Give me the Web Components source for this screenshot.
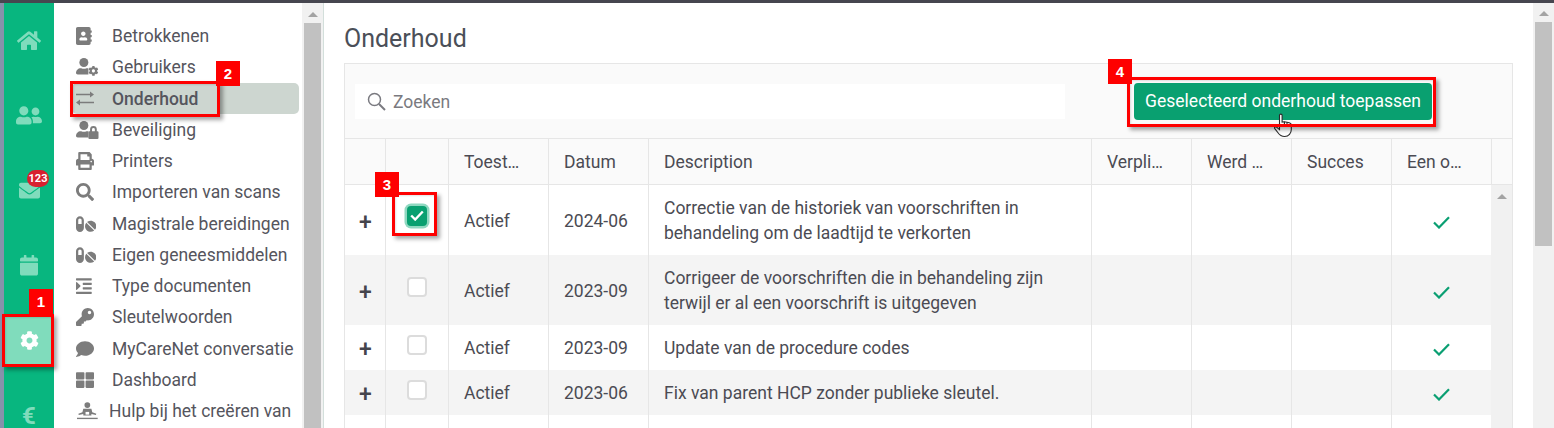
<!DOCTYPE html>
<html lang="nl">
<head>
<meta charset="utf-8">
<title>Onderhoud</title>
<style>
  html, body { margin: 0; height: 100%; overflow: hidden; background: #fff; }
  body { font-family: Roboto, "Liberation Sans", sans-serif; }
</style>
</head>
<body>
<app-shell>
  <side-rail slot="rail">
    <rail-item icon="home" size="24"></rail-item>
    <rail-item icon="friends" size="26"></rail-item>
    <rail-item icon="envelope" size="21" badge="123"></rail-item>
    <rail-item icon="calendar" size="18"></rail-item>
    <rail-item icon="cog" size="19" active></rail-item>
    <rail-item glyph="€"></rail-item>
  </side-rail>
  <side-menu slot="menu">
    <menu-item icon="book">Betrokkenen</menu-item>
    <menu-item icon="usercog">Gebruikers</menu-item>
    <menu-item icon="exchange" active>Onderhoud</menu-item>
    <menu-item icon="userlock">Beveiliging</menu-item>
    <menu-item icon="print">Printers</menu-item>
    <menu-item icon="search">Importeren van scans</menu-item>
    <menu-item icon="pills">Magistrale bereidingen</menu-item>
    <menu-item icon="pills">Eigen geneesmiddelen</menu-item>
    <menu-item icon="indent">Type documenten</menu-item>
    <menu-item icon="key">Sleutelwoorden</menu-item>
    <menu-item icon="comment">MyCareNet conversatie</menu-item>
    <menu-item icon="grid">Dashboard</menu-item>
    <menu-item icon="help" tight>Hulp bij het creëren van</menu-item>
  </side-menu>
  <maintenance-page heading="Onderhoud">
    <maintenance-row state="Actief" date="2024-06" tall checked>Correctie van de historiek van voorschriften in<br>behandeling om de laadtijd te verkorten</maintenance-row>
    <maintenance-row state="Actief" date="2023-09" tall striped>Corrigeer de voorschriften die in behandeling zijn<br>terwijl er al een voorschrift is uitgegeven</maintenance-row>
    <maintenance-row state="Actief" date="2023-09">Update van de procedure codes</maintenance-row>
    <maintenance-row state="Actief" date="2023-06" striped>Fix van parent HCP zonder publieke sleutel.</maintenance-row>
    <maintenance-row filler></maintenance-row>
  </maintenance-page>
</app-shell>

<hand-cursor style="left:1274px;top:113px"></hand-cursor>

<mark-box style="left:2px;top:314px;width:52px;height:53px"></mark-box>
<mark-tag style="left:29px;top:289px">1</mark-tag>
<mark-box style="left:70px;top:81px;width:150px;height:36px"></mark-box>
<mark-tag style="left:216px;top:61px">2</mark-tag>
<mark-box style="left:392px;top:192px;width:45px;height:44px"></mark-box>
<mark-tag style="left:375px;top:172px">3</mark-tag>
<mark-box style="left:1127px;top:77px;width:309px;height:50px"></mark-box>
<mark-tag style="left:1108px;top:59px">4</mark-tag>

<script>
'use strict';

(function () {
  // font awesome style shapes: [viewBox width, path]
  const ICONS = {
    home: [576, 'M280.37 148.26L96 300.11V464a16 16 0 0 0 16 16l112.06-.29a16 16 0 0 0 15.92-16V368a16 16 0 0 1 16-16h64a16 16 0 0 1 16 16v95.64a16 16 0 0 0 16 16.05L464 480a16 16 0 0 0 16-16V300L295.67 148.26a12.19 12.19 0 0 0-15.3 0zM571.6 251.47L488 182.56V44.05a12 12 0 0 0-12-12h-56a12 12 0 0 0-12 12v72.61L318.47 43a48 48 0 0 0-61 0L4.34 251.47a12 12 0 0 0-1.6 16.9l25.5 31A12 12 0 0 0 45.15 301l235.22-193.74a12.19 12.19 0 0 1 15.3 0L530.9 301a12 12 0 0 0 16.9-1.6l25.5-31a12 12 0 0 0-1.7-16.93z'],
    friends: [640, 'M192 256c61.9 0 112-50.1 112-112S253.9 32 192 32 80 82.1 80 144s50.1 112 112 112zm76.8 32h-8.3c-20.8 10-43.9 16-68.5 16s-47.6-6-68.5-16h-8.3C51.6 288 0 339.6 0 403.2V432c0 26.5 21.5 48 48 48h288c26.5 0 48-21.5 48-48v-28.8c0-63.6-51.6-115.2-115.2-115.2zM480 256c53 0 96-43 96-96s-43-96-96-96-96 43-96 96 43 96 96 96zm48 32h-3.8c-13.9 4.8-28.6 8-44.2 8s-30.3-3.2-44.2-8H432c-20.4 0-39.2 5.9-55.7 15.4 24.4 26.3 39.7 61.2 39.7 99.8v38.4c0 2.2-.5 4.3-.6 6.4H592c26.5 0 48-21.5 48-48 0-61.9-50.1-112-112-112z'],
    envelope: [512, 'M502.3 190.8c3.9-3.1 9.7-.2 9.7 4.7V400c0 26.5-21.5 48-48 48H48c-26.5 0-48-21.5-48-48V195.6c0-5 5.7-7.8 9.7-4.7 22.4 17.4 52.1 39.5 154.1 113.6 21.1 15.4 56.7 47.8 92.2 47.6 35.7.3 72-32.8 92.3-47.6 102-74.1 131.6-96.3 154-113.7zM256 320c23.2.4 56.6-29.2 73.4-41.4 132.7-96.3 142.8-104.7 173.4-128.7 5.8-4.5 9.2-11.5 9.2-18.9v-19c0-26.5-21.5-48-48-48H48C21.5 64 0 85.5 0 112v19c0 7.4 3.4 14.3 9.2 18.9 30.6 23.9 40.7 32.4 173.4 128.7 16.8 12.2 50.2 41.8 73.4 41.4z'],
    calendar: [448, 'M12 192h424c6.6 0 12 5.4 12 12v260c0 26.5-21.5 48-48 48H48c-26.5 0-48-21.5-48-48V204c0-6.6 5.4-12 12-12zm436-44v-36c0-26.5-21.5-48-48-48h-48V12c0-6.6-5.4-12-12-12h-40c-6.6 0-12 5.4-12 12v52H160V12c0-6.6-5.4-12-12-12h-40c-6.6 0-12 5.4-12 12v52H48C21.5 64 0 85.5 0 112v36c0 6.6 5.4 12 12 12h424c6.6 0 12-5.4 12-12z'],
    cog: [512, 'M487.4 315.7l-42.6-24.6c4.3-23.2 4.3-47 0-70.2l42.6-24.6c4.9-2.8 7.1-8.6 5.5-14-11.1-35.6-30-67.8-54.7-94.6-3.8-4.1-10-5.1-14.8-2.3L380.8 110c-17.9-15.4-38.5-27.3-60.8-35.1V25.8c0-5.6-3.9-10.5-9.4-11.7-36.7-8.2-74.3-7.8-109.2 0-5.5 1.2-9.4 6.1-9.4 11.7V75c-22.2 7.9-42.8 19.8-60.8 35.1L88.7 85.5c-4.9-2.8-11-1.9-14.8 2.3-24.7 26.7-43.6 58.9-54.7 94.6-1.7 5.4.6 11.2 5.5 14L67.3 221c-4.3 23.2-4.3 47 0 70.2l-42.6 24.6c-4.9 2.8-7.1 8.6-5.5 14 11.1 35.6 30 67.8 54.7 94.6 3.8 4.1 10 5.1 14.8 2.3l42.6-24.6c17.9 15.4 38.5 27.3 60.8 35.1v49.2c0 5.6 3.9 10.5 9.4 11.7 36.7 8.2 74.3 7.8 109.2 0 5.5-1.2 9.4-6.1 9.4-11.7v-49.2c22.2-7.9 42.8-19.8 60.8-35.1l42.6 24.6c4.9 2.8 11 1.9 14.8-2.3 24.7-26.7 43.6-58.9 54.7-94.6 1.5-5.5-.7-11.3-5.6-14.1zM256 336c-44.1 0-80-35.9-80-80s35.9-80 80-80 80 35.9 80 80-35.9 80-80 80z'],
    book: [448, 'M436 160c6.6 0 12-5.4 12-12v-40c0-6.6-5.4-12-12-12h-20V48c0-26.5-21.5-48-48-48H48C21.5 0 0 21.5 0 48v416c0 26.5 21.5 48 48 48h320c26.5 0 48-21.5 48-48v-48h20c6.6 0 12-5.4 12-12v-40c0-6.6-5.4-12-12-12h-20v-64h20c6.6 0 12-5.4 12-12v-40c0-6.6-5.4-12-12-12h-20v-64h20zm-228-32c35.3 0 64 28.7 64 64s-28.7 64-64 64-64-28.7-64-64 28.7-64 64-64zm112 236.8c0 10.6-10 19.2-22.4 19.2H118.4C106 384 96 375.4 96 364.8v-19.2c0-31.8 30.1-57.6 67.2-57.6h5c12.3 5.1 25.7 8 39.8 8s27.6-2.9 39.8-8h5c37.1 0 67.2 25.8 67.2 57.6v19.2z'],
    print: [512, 'M448 192V77.25c0-8.49-3.37-16.62-9.37-22.63L393.37 9.37c-6-6-14.14-9.37-22.63-9.37H96C78.33 0 64 14.33 64 32v160c-35.35 0-64 28.65-64 64v112c0 8.84 7.16 16 16 16h48v96c0 17.67 14.33 32 32 32h320c17.67 0 32-14.33 32-32v-96h48c8.84 0 16-7.16 16-16V256c0-35.35-28.65-64-64-64zm-64 256H128v-96h256v96zm0-224H128V64h192v48c0 8.84 7.16 16 16 16h48v96zm48 72c-13.25 0-24-10.75-24-24 0-13.26 10.75-24 24-24s24 10.74 24 24c0 13.25-10.75 24-24 24z'],
    search: [512, 'M505 442.7L405.3 343c-4.5-4.5-10.6-7-17-7H372c27.6-35.3 44-79.7 44-128C416 93.1 322.9 0 208 0S0 93.1 0 208s93.1 208 208 208c48.3 0 92.7-16.4 128-44v16.3c0 6.4 2.5 12.5 7 17l99.7 99.7c9.4 9.4 24.6 9.4 33.9 0l28.3-28.3c9.4-9.4 9.4-24.6.1-34zM208 336c-70.7 0-128-57.2-128-128 0-70.7 57.2-128 128-128 70.7 0 128 57.2 128 128 0 70.7-57.2 128-128 128z'],
    pills: [576, 'M112 32C50.1 32 0 82.1 0 144v224c0 61.9 50.1 112 112 112s112-50.1 112-112V144c0-61.9-50.1-112-112-112zm48 224H64V144c0-26.5 21.5-48 48-48s48 21.5 48 48v112zm139.7-29.7c-3.5-3.5-9.4-3.1-12.3.8-45.3 62.5-40.4 150.1 15.9 206.4 56.3 56.3 143.9 61.2 206.4 15.9 4-2.9 4.3-8.8.8-12.3L299.7 226.3zm229.8-19c-56.3-56.3-143.9-61.2-206.4-15.9-4 2.9-4.3 8.8-.8 12.3l210.8 210.8c3.5 3.5 9.4 3.1 12.3-.8 45.3-62.6 40.5-150.1-15.9-206.4z'],
    indent: [448, 'M27.31 363.3l96-96a16 16 0 0 0 0-22.62l-96-96C17.27 138.66 0 145.78 0 160v192c0 14.31 17.33 21.3 27.31 11.3zM432 416H16a16 16 0 0 0-16 16v32a16 16 0 0 0 16 16h416a16 16 0 0 0 16-16v-32a16 16 0 0 0-16-16zm3.17-128H204.83A12.82 12.82 0 0 0 192 300.83v38.34A12.82 12.82 0 0 0 204.83 352h230.34A12.82 12.82 0 0 0 448 339.17v-38.34A12.82 12.82 0 0 0 435.17 288zm0-128H204.83A12.82 12.82 0 0 0 192 172.83v38.34A12.82 12.82 0 0 0 204.83 224h230.34A12.82 12.82 0 0 0 448 211.17v-38.34A12.82 12.82 0 0 0 435.17 160zM432 32H16A16 16 0 0 0 0 48v32a16 16 0 0 0 16 16h416a16 16 0 0 0 16-16V48a16 16 0 0 0-16-16z'],
    key: [512, 'M512 176.001C512 273.203 433.202 352 336 352c-11.22 0-22.19-1.062-32.827-3.069l-24.012 27.014A23.999 23.999 0 0 1 261.223 384H224v40c0 13.255-10.745 24-24 24h-40v40c0 13.255-10.745 24-24 24H24c-13.255 0-24-10.745-24-24v-78.059c0-6.365 2.529-12.47 7.029-16.971l161.802-161.802C163.108 213.814 160 195.271 160 176 160 78.798 238.797.001 335.999 0 433.488-.001 512 78.511 512 176.001zM336 128c0 26.51 21.49 48 48 48s48-21.49 48-48-21.49-48-48-48-48 21.49-48 48z'],
    comment: [512, 'M256 32C114.6 32 0 125.1 0 240c0 49.6 21.4 95 57 130.7C44.5 421.1 2.7 466 2.2 466.5c-2.2 2.3-2.8 5.7-1.5 8.7S4.8 480 8 480c66.3 0 116-31.8 140.6-51.4 32.7 12.3 69 19.4 107.4 19.4 141.4 0 256-93.1 256-208S397.4 32 256 32z'],
    grid: [512, 'M296 32h192c13.255 0 24 10.745 24 24v160c0 13.255-10.745 24-24 24H296c-13.255 0-24-10.745-24-24V56c0-13.255 10.745-24 24-24zm-80 0H24C10.745 32 0 42.745 0 56v160c0 13.255 10.745 24 24 24h192c13.255 0 24-10.745 24-24V56c0-13.255-10.745-24-24-24zM0 296v160c0 13.255 10.745 24 24 24h192c13.255 0 24-10.745 24-24V296c0-13.255-10.745-24-24-24H24c-13.255 0-24 10.745-24 24zm296 184h192c13.255 0 24-10.745 24-24V296c0-13.255-10.745-24-24-24H296c-13.255 0-24 10.745-24 24v160c0 13.255 10.745 24 24 24z'],
  };

  const PERSON = '<circle cx="224" cy="128" r="128"/><path d="M0 464v-42c0-74 60-134 134-134h17c23 10 47 16 73 16s50-6 73-16h17c14 0 27 2 39 6v176H48c-26 0-48-22-48-48z"/>';

  // icons that are put together from more than one shape
  const DRAWN = {
    usercog: `<svg viewBox="0 0 640 512">${PERSON}<g transform="translate(352 224) scale(.56)"><path d="${ICONS.cog[1]}"/></g></svg>`,
    userlock: `<svg viewBox="0 0 640 512">${PERSON}<path fill-rule="evenodd" d="M400 288v-48a96 96 0 0 1 192 0v48h16a32 32 0 0 1 32 32v160a32 32 0 0 1-32 32H384a32 32 0 0 1-32-32V320a32 32 0 0 1 32-32zm56 0h80v-48a40 40 0 0 0-80 0z"/></svg>`,
    exchange: `<svg viewBox="0 0 18 18"><path d="M0 4.500h15M3 12.500h15" stroke="#7c7c7c" stroke-width="1.500" fill="none"/><path d="M14 1.500l4 3-4 3zM4 9.500l-4 3 4 3z"/></svg>`,
    help: `<svg viewBox="0 0 23 20"><circle cx="11.5" cy="3.4" r="3.2"/><path d="M7 7.5h9l1 4 4.5 1.5-.5 1.5-5-1.200v1.700H7v-1.700l-5 1.200-.5-1.500L6 11.500z"/><rect x="9.500" y="11" width="4" height="3" fill="#fff"/><rect x="0" y="17.500" width="23" height="1.500"/></svg>`,
  };

  function iconMarkup(name) {
    if (DRAWN[name]) return DRAWN[name];
    const [width, path] = ICONS[name];
    return `<svg viewBox="0 0 ${width} 512"><path d="${path}"/></svg>`;
  }

  class AppShell extends HTMLElement {
    constructor() {
      super();
      this.attachShadow({ mode: 'open' }).innerHTML = `
        <style>
          :host { display: flex; flex-direction: column; height: 428px; }
          .topbar { height: 3px; background: #46464f; flex: none; }
          .body { flex: 1; display: flex; min-height: 0; }
          .edge { width: 4px; background: #8592ab; flex: none; }
          ::slotted(side-menu) { flex: none; }
        </style>
        <div class="topbar"></div>
        <div class="body">
          <div class="edge"></div>
          <slot name="rail"></slot>
          <slot name="menu"></slot>
          <slot></slot>
        </div>
      `;
    }
  }

  class SideRail extends HTMLElement {
    constructor() {
      super();
      this.attachShadow({ mode: 'open' }).innerHTML = `
        <style>
          :host { display: flex; flex-direction: column; width: 50px; flex: none; background: #08b67f; overflow: hidden; }
        </style>
        <slot></slot>
      `;
    }
  }

  class RailItem extends HTMLElement {
    constructor() {
      super();
      const shadow = this.attachShadow({ mode: 'open' });
      const size = this.getAttribute('size') || 20;
      const icon = this.getAttribute('icon');
      const badge = this.getAttribute('badge');
      const glyph = this.getAttribute('glyph');
      shadow.innerHTML = `
        <style>
          :host { display: flex; align-items: center; height: 75px; flex: none; color: #80dcbc; }
          .tile { position: relative; display: flex; align-items: center; justify-content: center; width: 100%; height: 51px; box-sizing: border-box; }
          :host([active]) .tile { background: #80dcbc; color: #fff; width: 48px; padding-left: 3px; }
          svg { width: ${size}px; display: block; fill: currentColor; }
          .glyph { font: 700 24px/1 Roboto, sans-serif; }
          .badge { position: absolute; left: 23px; top: 5px; height: 17px; width: 22px; border-radius: 9px; background: #d8202f; color: #fff; font: 700 11px/17px Roboto, sans-serif; text-align: center; }
        </style>
        <div class="tile">
          ${icon ? iconMarkup(icon) : ''}
          ${glyph ? `<span class="glyph">${glyph}</span>` : ''}
          ${badge ? `<span class="badge">${badge}</span>` : ''}
        </div>
      `;
    }
  }

  class SideMenu extends HTMLElement {
    constructor() {
      super();
      this.attachShadow({ mode: 'open' }).innerHTML = `
        <style>
          :host { display: flex; width: 270px; overflow: hidden; border-right: 1px solid #d3dfdb; box-sizing: border-box; }
          .list { flex: 1; min-width: 0; padding: 17.4px 3px 0 18px; box-sizing: border-box; }
          .track { width: 21px; flex: none; background: #f1f1f1; display: flex; flex-direction: column; align-items: center; }
          .arrow { width: 0; height: 0; border: 5px solid transparent; border-top: 0; border-bottom: 5px solid #a3a3a3; margin: 9px 0 6px; flex: none; }
          .thumb { width: 17px; flex: 1; background: #c1c1c1; }
        </style>
        <div class="list"><slot></slot></div>
        <div class="track"><div class="arrow"></div><div class="thumb"></div></div>
      `;
    }
  }

  class MenuItem extends HTMLElement {
    constructor() {
      super();
      this.attachShadow({ mode: 'open' }).innerHTML = `
        <style>
          :host { display: flex; align-items: center; height: 31.25px; padding-left: 4px; border-radius: 5px; color: #55555d; font-size: 17.5px; white-space: nowrap; }
          :host([active]) { background: #cdd6d0; font-weight: 500; }
          .icon { width: 36px; flex: none; display: flex; color: #7c7c7c; fill: #7c7c7c; }
          :host([tight]) .icon { width: 33px; margin-left: 1px; margin-right: -1px; }
          svg { height: 18px; max-width: 23px; display: block; }
        </style>
        <span class="icon">${iconMarkup(this.getAttribute('icon'))}</span>
        <span><slot></slot></span>
      `;
    }
  }

  class MaintenancePage extends HTMLElement {
    constructor() {
      super();
      const heading = this.getAttribute('heading');
      this.attachShadow({ mode: 'open' }).innerHTML = `
        <style>
          :host { display: flex; flex: 1; min-width: 0; color: #4b4b53; font-size: 17.5px; }
          .content { flex: 1; min-width: 0; padding: 0 20px; display: flex; flex-direction: column; box-sizing: border-box; }
          h1 { margin: 0; height: 60px; font: 400 25px/72px Roboto, sans-serif; color: #4b4f58; flex: none; }
          .panel { flex: 1; min-height: 0; display: flex; flex-direction: column; border: 1px solid #e6e6e6; border-bottom: 0; }
          .toolbar { height: 74px; flex: none; display: flex; align-items: center; background: #fafafa; border-bottom: 1px solid #e6e6e6; padding-left: 10px; box-sizing: content-box; }
          .search { width: 710px; height: 35px; background: #fff; display: flex; align-items: center; padding-left: 12px; box-sizing: border-box; color: #7a7a80; flex: none; }
          .search svg { width: 19px; height: 19px; margin-right: 7px; flex: none; }
          .search span { padding-top: 2px; }
          button { margin-left: 69px; width: 298px; height: 37px; border: 0; border-radius: 4px; background: #09a070; color: #fff; font: 400 17.5px Roboto, sans-serif; padding: 0; white-space: nowrap; }
          .head { height: 45px; flex: none; display: flex; background: #fafafa; border-bottom: 1px solid #e6e6e6; }
          .head div { width: 100px; padding-left: 15px; box-sizing: border-box; line-height: 47px; border-right: 1px solid #e6e6e6; flex: none; }
          .head .plus { width: 41px; padding: 0; }
          .head .pick { width: 63px; padding: 0; }
          .head .desc { width: 443px; }
          .table { flex: 1; min-height: 0; display: flex; }
          .rows { flex: 1; min-width: 0; display: flex; flex-direction: column; }
          .track { width: 21px; flex: none; background: #f1f1f1; }
          .track i { display: block; width: 0; height: 0; margin: 9px auto 0; border: 5px solid transparent; border-top: 0; border-bottom: 5px solid #a3a3a3; }
          .page-track { width: 21px; flex: none; background: #f1f1f1; display: flex; flex-direction: column; align-items: center; }
          .page-track i { display: block; width: 0; height: 0; margin: 8px 0 6px; border: 5px solid transparent; border-top: 0; border-bottom: 5px solid #a3a3a3; flex: none; }
          .page-track b { display: block; width: 17px; height: 224px; background: #c1c1c1; flex: none; }
        </style>
        <div class="content">
          <h1>${heading}</h1>
          <div class="panel">
            <div class="toolbar">
              <div class="search">
                <svg viewBox="0 0 19 19" fill="none" stroke="#7a7a80" stroke-width="1.500"><circle cx="7.500" cy="7.500" r="6"/><path d="M12 12l6 6" stroke-width="2"/></svg>
                <span>Zoeken</span>
              </div>
              <button type="button">Geselecteerd onderhoud toepassen</button>
            </div>
            <div class="head">
              <div class="plus"></div><div class="pick"></div>
              <div>Toest…</div><div>Datum</div><div class="desc">Description</div>
              <div>Verpli…</div><div>Werd …</div><div>Succes</div><div>Een o…</div>
            </div>
            <div class="table">
              <div class="rows"><slot></slot></div>
              <div class="track"><i></i></div>
            </div>
          </div>
        </div>
        <div class="page-track"><i></i><b></b></div>
      `;
    }
  }

  class MaintenanceRow extends HTMLElement {
    constructor() {
      super();
      const filler = this.hasAttribute('filler');
      const state = this.getAttribute('state') || '';
      const date = this.getAttribute('date') || '';
      this.attachShadow({ mode: 'open' }).innerHTML = `
        <style>
          :host { display: flex; height: 45px; flex: none; line-height: 25px; }
          :host([tall]) { height: 70px; }
          :host([filler]) { flex: 1; height: auto; }
          :host([striped]) { background: #f4f4f4; }
          .cell { width: 100px; flex: none; box-sizing: border-box; border-right: 1px solid #e6e6e6; padding: 2px 0 0 15px; display: flex; align-items: center; }
          .plus { width: 41px; padding: 4px 0 0 14px; font: 500 23px/1 Roboto, sans-serif; color: #44444c; }
          .pick { width: 63px; padding: 0 0 6px 21px; }
          .desc { width: 443px; }
          .last { border-right: 0; padding: 4px 0 0 41px; }
          .box { width: 20px; height: 20px; box-sizing: border-box; border: 2px solid #dcdcdc; border-radius: 4px; background: #fff; }
          .box svg { display: none; }
          :host([checked]) .box { background: #09a070; border-color: #09a070; box-shadow: 0 0 0 2.500px #8fd8c0; display: flex; align-items: center; justify-content: center; }
          :host([checked]) .box svg { display: block; }
          :host([checked]) .pick { padding-bottom: 9px; }
          .tick { width: 17px; height: 13px; display: block; }
        </style>
        <div class="cell plus">${filler ? '' : '+'}</div>
        <div class="cell pick">${filler ? '' : `<div class="box"><svg width="14" height="11" viewBox="0 0 14 11" fill="none" stroke="#fff" stroke-width="2.400"><path d="M1.200 5.500l4 4 7.600-8"/></svg></div>`}</div>
        <div class="cell">${state}</div>
        <div class="cell">${date}</div>
        <div class="cell desc"><span><slot></slot></span></div>
        <div class="cell"></div><div class="cell"></div><div class="cell"></div>
        <div class="cell last">${filler ? '' : `<svg class="tick" viewBox="0 0 17 13" fill="none" stroke="#0a9f72" stroke-width="2.200"><path d="M1 6.500l5 5L16 1.200"/></svg>`}</div>
      `;
    }
  }

  class HandCursor extends HTMLElement {
    constructor() {
      super();
      this.attachShadow({ mode: 'open' }).innerHTML = `
        <style>
          :host { position: absolute; width: 19px; height: 25px; display: block; }
          svg { display: block; }
        </style>
        <svg width="19" height="25" viewBox="0 0 19 25" fill="#fff" stroke="#2a2a2a" stroke-width="1.100">
          <path d="M5.500 2.200c0-1.500 2.600-1.500 2.600 0v6.800l2.300-.3 2.500.5 2.400.6c1.300.3 2 1.100 2 2.400v4.300c0 3.800-2.600 7-6.600 7-3.200 0-5.200-1.400-6.900-4L.8 15.600c-.8-1.200.7-2.500 1.800-1.500l2.900 2.500z"/>
          <path d="M10.400 8.700v4M13 9.200v3.500" fill="none"/>
        </svg>
      `;
    }
  }

  // the red frames of the manual sit on top of the application
  class MarkBox extends HTMLElement {
    constructor() {
      super();
      this.attachShadow({ mode: 'open' }).innerHTML = `
        <style>
          :host { position: absolute; display: block; box-sizing: border-box; border: 3px solid #fe0000; box-shadow: 3px 3px 4px rgba(0, 0, 0, .35), inset 1px 1px 2px rgba(0, 0, 0, .12); }
        </style>
      `;
    }
  }

  class MarkTag extends HTMLElement {
    constructor() {
      super();
      this.attachShadow({ mode: 'open' }).innerHTML = `
        <style>
          :host { position: absolute; display: block; width: 24px; height: 25px; background: #fe0000; color: #fff; font: 700 15px/25px "Liberation Sans", sans-serif; text-align: center; }
        </style>
        <slot></slot>
      `;
    }
  }

  customElements.define('app-shell', AppShell);
  customElements.define('side-rail', SideRail);
  customElements.define('rail-item', RailItem);
  customElements.define('side-menu', SideMenu);
  customElements.define('menu-item', MenuItem);
  customElements.define('maintenance-page', MaintenancePage);
  customElements.define('maintenance-row', MaintenanceRow);
  customElements.define('hand-cursor', HandCursor);
  customElements.define('mark-box', MarkBox);
  customElements.define('mark-tag', MarkTag);
})();
</script>
</body>
</html>
